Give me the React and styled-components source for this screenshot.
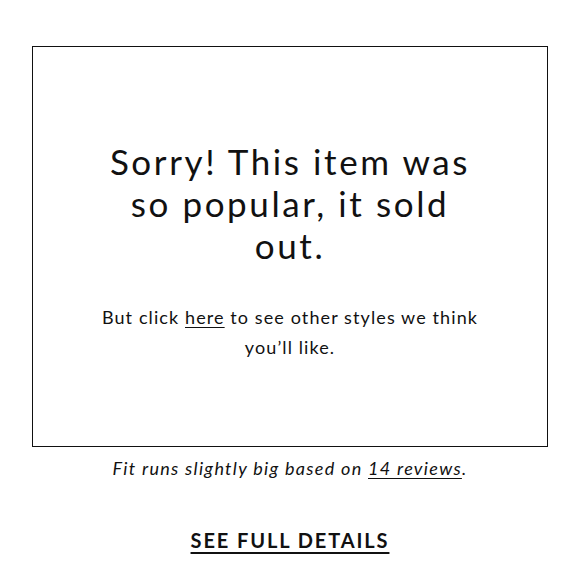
import React from 'react';
import styled, { createGlobalStyle } from 'styled-components';

const GlobalStyle = createGlobalStyle`
  html, body { margin: 0; padding: 0; background: #fff; }
  body { font-family: Lato, "Open Sans", sans-serif; color: #111; }
`;

const Page = styled.div`
  width: 580px;
  height: 580px;
  box-sizing: border-box;
  padding: 46px 32px 0;
  display: flex;
  flex-direction: column;
  align-items: center;
`;

const SoldOutBox = styled.div`
  width: 100%;
  height: 401px;
  box-sizing: border-box;
  border: 1px solid #111;
  display: flex;
  flex-direction: column;
  align-items: center;
  justify-content: center;
  text-align: center;
  padding: 8px 40px 0;
`;

const Heading = styled.h2`
  margin: 0;
  font-weight: 400;
  font-size: 35px;
  line-height: 42px;
  letter-spacing: 2.6px;
  max-width: 400px;
`;

const Message = styled.p`
  margin: 36px 0 0;
  font-size: 18px;
  line-height: 30px;
  max-width: 400px;
  letter-spacing: 1.1px;
`;

const TextLink = styled.a`
  color: inherit;
  text-decoration: underline;
  text-underline-offset: 3px;
  text-decoration-thickness: 1px;
`;

const FitNote = styled.p`
  margin: 9px 0 0;
  font-style: italic;
  font-size: 18px;
  line-height: 24px;
  letter-spacing: 1.3px;
`;

const DetailsButton = styled.a`
  margin-top: 48px;
  font-weight: 700;
  font-size: 20px;
  letter-spacing: 1.9px;
  color: #111;
  text-decoration: underline;
  text-decoration-thickness: 2px;
  text-underline-offset: 4px;
`;

export default function App() {
  return (
    <>
      <GlobalStyle />
      <Page>
        <SoldOutBox>
          <Heading>Sorry! This item was so popular, it sold out.</Heading>
          <Message>
            But click <TextLink href="#">here</TextLink> to see other styles we think you’ll like.
          </Message>
        </SoldOutBox>
        <FitNote>
          Fit runs slightly big based on <TextLink href="#">14 reviews</TextLink>.
        </FitNote>
        <DetailsButton href="#">SEE FULL DETAILS</DetailsButton>
      </Page>
    </>
  );
}
